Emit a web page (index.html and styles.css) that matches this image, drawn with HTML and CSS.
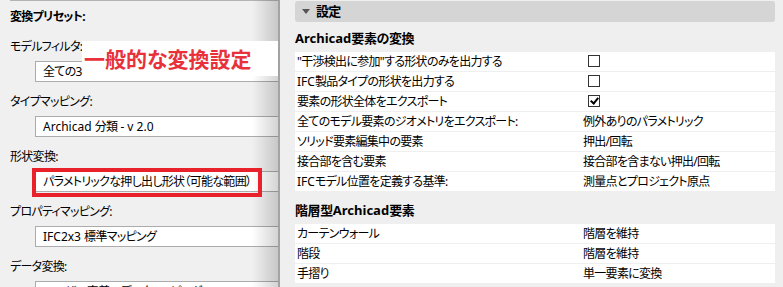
FILE: index.html
```html
<!DOCTYPE html>
<html lang="ja">
<head>
  <meta charset="UTF-8" />
  <meta name="viewport" content="width=device-width, initial-scale=1.0" />
  <title>IFC 変換設定</title>
  <link rel="stylesheet" href="styles.css">
</head>
<body>
  <div class="presets">
    <h2 class="presets-title">変換プリセット:</h2>

    <div class="field">
      <label>モデルフィルタ:</label>
      <div class="box">全ての<span class="lat">3</span></div>
    </div>

    <div class="field">
      <label>タイプマッピング:</label>
      <div class="box"><span class="lat">Archicad </span>分類<span class="lat"> - v 2.0</span></div>
    </div>

    <div class="field">
      <label>形状変換:</label>
      <div class="box">パラメトリックな押し出し形状（可能な範囲）</div>
    </div>

    <div class="field">
      <label>プロパティマッピング:</label>
      <div class="box"><span class="lat">IFC2x3 </span>標準マッピング</div>
    </div>

    <div class="field">
      <label>データ変換:</label>
      <div class="box">ユーザー定義のデータマッピング</div>
    </div>

    <!-- annotations drawn over the dialog -->
    <div class="note">一般的な変換設定</div>
    <div class="mark"></div>
  </div>

  <div class="settings">
    <div class="section-bar"><span class="arrow"></span>設定</div>

    <h3><span class="lat">Archicad</span>要素の変換</h3>
    <div class="table">
      <div class="row"><span>"干渉検出に参加"する形状のみを出力する</span><span><i class="check"></i></span></div>
      <div class="row"><span><span class="lat">IFC</span>製品タイプの形状を出力する</span><span><i class="check"></i></span></div>
      <div class="row"><span>要素の形状全体をエクスポート</span><span><i class="check on"></i></span></div>
      <div class="row"><span>全てのモデル要素のジオメトリをエクスポート:</span><span>例外ありのパラメトリック</span></div>
      <div class="row"><span>ソリッド要素編集中の要素</span><span>押出/回転</span></div>
      <div class="row"><span>接合部を含む要素</span><span>接合部を含まない押出/回転</span></div>
      <div class="row"><span><span class="lat">IFC</span>モデル位置を定義する基準:</span><span>測量点とプロジェクト原点</span></div>
    </div>

    <h3>階層型<span class="lat">Archicad</span>要素</h3>
    <div class="table">
      <div class="row"><span>カーテンウォール</span><span>階層を維持</span></div>
      <div class="row"><span>階段</span><span>階層を維持</span></div>
      <div class="row"><span>手摺り</span><span>単一要素に変換</span></div>
    </div>
  </div>
</body>
</html>
```

FILE: styles.css
```css
html, body {
  margin: 0;
  height: 100%;
}
body {
  display: flex;
  overflow: hidden;
  background: #efefef;
  font-family: "Noto Sans", "Noto Sans CJK JP", sans-serif;
  font-size: 12px;
  font-feature-settings: "palt";
  letter-spacing: -0.7px;
  color: #000;
}
.lat {
  letter-spacing: 0;
}

/* left column */
.presets {
  position: relative;
  width: 268px;
  flex: none;
  padding-left: 10px;
  background: #f0f0f0;
  border-right: 2px solid #a3a3a3;
}
.presets::before {
  content: "";
  position: absolute;
  left: 10px;
  right: 0;
  top: 0;
  border-top: 1px solid #b4b4b4;
}
.presets::after {
  content: "";
  position: absolute;
  top: 0;
  bottom: 0;
  right: 0;
  width: 26px;
  background: linear-gradient(to right, rgba(0,0,0,0), rgba(0,0,0,0.17));
  z-index: 1;
}
.presets-title {
  margin: 7px 0 10px;
  font-size: 12px;
  font-weight: bold;
  line-height: 20px;
}
.field label {
  display: block;
  line-height: 20px;
}
.field .box {
  margin: 4px 0 10px 25px;
  height: 19px;
  line-height: 19px;
  padding-left: 7px;
  background: #fff;
  border: 1px solid #acacac;
  border-right: none;
  white-space: nowrap;
  overflow: hidden;
}
.note {
  position: absolute;
  left: 82px;
  top: 41px;
  width: 194px;
  height: 35px;
  padding-left: 2px;
  background: #fff;
  color: #e8313a;
  font-family: "Noto Sans CJK JP", sans-serif;
  font-size: 21px;
  font-weight: bold;
  line-height: 35px;
  letter-spacing: 0;
  z-index: 2;
}
.mark {
  position: absolute;
  left: 32px;
  top: 168px;
  width: 222px;
  height: 21px;
  border: 4px solid #e8212b;
  z-index: 2;
}

/* right column */
.settings {
  flex: 1;
  padding: 1px 8px 0 15px;
}
.section-bar {
  height: 21px;
  line-height: 21px;
  background: #d5d5d5;
  border-radius: 3px;
  font-weight: bold;
  font-size: 13px;
  padding-left: 7px;
}
.arrow {
  display: inline-block;
  width: 0;
  height: 0;
  border-left: 4px solid transparent;
  border-right: 4px solid transparent;
  border-top: 5px solid #555;
  margin-right: 6px;
  vertical-align: 2px;
}
.settings h3 {
  margin: 8px 0 5px;
  font-size: 13px;
  font-weight: bold;
  line-height: 17px;
  letter-spacing: -0.4px;
}
.settings h3 + .table + h3 {
  margin-top: 11px;
}
.table {
  display: flex;
  flex-direction: column;
  gap: 1px;
}
.row {
  display: grid;
  grid-template-columns: 288px 1fr;
  height: 19px;
  line-height: 19px;
  background: #fff;
  white-space: nowrap;
}
.row > span:first-child {
  padding-left: 2px;
}
.check {
  display: inline-block;
  position: relative;
  box-sizing: border-box;
  width: 12px;
  height: 12px;
  margin-left: 5px;
  border: 1px solid #333;
  background: #fff;
  vertical-align: -1px;
}
.check.on::after {
  content: "";
  position: absolute;
  left: 3px;
  top: 0px;
  width: 3px;
  height: 6px;
  border-right: 2px solid #000;
  border-bottom: 2px solid #000;
  transform: rotate(40deg);
}
```
